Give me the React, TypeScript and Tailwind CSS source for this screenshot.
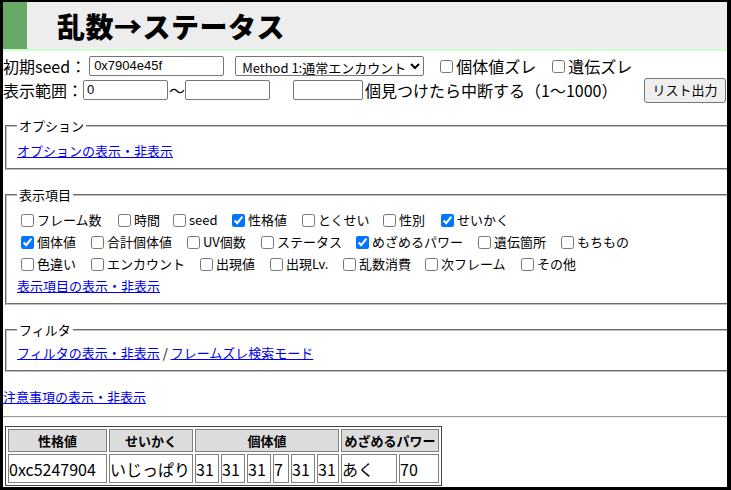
import React from "react";

type Item = { label: string; checked: boolean; w: string };

const rows: Item[][] = [
  [
    { label: "フレーム数", checked: false, w: "w-[97px]" },
    { label: "時間", checked: false, w: "w-[55px]" },
    { label: "seed", checked: false, w: "w-[59px]" },
    { label: "性格値", checked: true, w: "w-[70px]" },
    { label: "とくせい", checked: false, w: "w-[81px]" },
    { label: "性別", checked: false, w: "w-[58px]" },
    { label: "せいかく", checked: true, w: "w-[90px]" },
  ],
  [
    { label: "個体値", checked: true, w: "w-[70px]" },
    { label: "合計個体値", checked: false, w: "w-[96px]" },
    { label: "UV個数", checked: false, w: "w-[74px]" },
    { label: "ステータス", checked: false, w: "w-[95px]" },
    { label: "めざめるパワー", checked: true, w: "w-[122px]" },
    { label: "遺伝箇所", checked: false, w: "w-[83px]" },
    { label: "もちもの", checked: false, w: "w-[90px]" },
  ],
  [
    { label: "色違い", checked: false, w: "w-[70px]" },
    { label: "エンカウント", checked: false, w: "w-[109px]" },
    { label: "出現値", checked: false, w: "w-[70px]" },
    { label: "出現Lv.", checked: false, w: "w-[73px]" },
    { label: "乱数消費", checked: false, w: "w-[82px]" },
    { label: "次フレーム", checked: false, w: "w-[96px]" },
    { label: "その他", checked: false, w: "w-[80px]" },
  ],
];

const ivs = [
  { v: "31", w: "w-[24px]" },
  { v: "31", w: "w-[24px]" },
  { v: "31", w: "w-[24px]" },
  { v: "7", w: "w-[16px]" },
  { v: "31", w: "w-[24px]" },
  { v: "31", w: "w-[22px]" },
];

const Link = ({ children }: { children: React.ReactNode }) => (
  <a href="#" className="text-[#0000ee] underline underline-offset-[1px]">
    {children}
  </a>
);

const fieldsetCls =
  "ml-[2px] -mr-[6px] border-2 [border-style:groove] border-[#c0c0c0] pl-[10px] pr-[10px]";

export default function App() {
  return (
    <div className="w-[731px] h-[490px] bg-black pt-[2px] pl-[3px] pr-[4px] pb-[3px] font-['Noto_Sans_CJK_JP','Noto_Sans',sans-serif]">
      <div className="bg-white w-full h-full overflow-hidden text-black">
        {/* header */}
        <div className="flex h-[49px] bg-[#ededed] border-b-2 border-[#ccffcc]">
          <div className="w-[24px] bg-[#67a967]" />
          <h1 className="ml-[30px] self-center text-[28px] font-black leading-none tracking-[0.5px]">
            乱数→ステータス
          </h1>
        </div>

        {/* seed row */}
        <div className="flex items-center h-[24px] mt-[3px] text-[16px] leading-[20px]">
          <span>初期seed：</span>
          <input
            className="ml-[3px] w-[135px] h-[20px] border border-[#767676] rounded-[2px] pl-[4px] text-[13px] font-['Liberation_Sans',sans-serif]"
            defaultValue="0x7904e45f"
          />
          <select className="ml-[11px] w-[189px] h-[20px] border border-[#767676] rounded-[2px] bg-white text-[13px] pl-[2px]">
            <option>Method 1:通常エンカウント</option>
          </select>
          <label className="ml-[12px] w-[112px] flex items-center">
            <input type="checkbox" className="m-0 ml-[4px] mr-[3px] w-[13px] h-[13px]" />
            個体値ズレ
          </label>
          <label className="flex items-center">
            <input type="checkbox" className="m-0 ml-[4px] mr-[3px] w-[13px] h-[13px]" />
            遺伝ズレ
          </label>
        </div>

        {/* range row */}
        <div className="flex items-center h-[24px] text-[16px] leading-[20px]">
          <span>表示範囲：</span>
          <input
            className="w-[85px] h-[20px] border border-[#767676] rounded-[2px] pl-[3px] text-[13px] font-['Liberation_Sans',sans-serif]"
            defaultValue="0"
          />
          <span className="ml-[1px]">〜</span>
          <input className="w-[85px] h-[20px] border border-[#767676] rounded-[2px]" />
          <input className="ml-[23px] w-[70px] h-[20px] border border-[#767676] rounded-[2px]" />
          <span className="ml-[2px]">個見つけたら中断する（1〜1000）</span>
          <button className="ml-auto mr-[1px] w-[82px] h-[25px] border border-[#767676] rounded-[3px] bg-[#efefef] text-[13px]">
            リスト出力
          </button>
        </div>

        {/* options */}
        <fieldset className={fieldsetCls + " mt-[15px] pb-[8px]"}>
          <legend className="px-[2px] text-[13px] leading-[17px]">オプション</legend>
          <div className="pt-[8px] h-[26px] text-[13px] leading-[18px]">
            <Link>オプションの表示・非表示</Link>
          </div>
        </fieldset>

        {/* display items */}
        <fieldset className={fieldsetCls + " mt-[16px] pb-[7px]"}>
          <legend className="px-[2px] text-[13px] leading-[17px]">表示項目</legend>
          <div className="pt-[6px] text-[13px] leading-[18px]">
            {rows.map((row, i) => (
              <div key={i} className="flex h-[22px] items-center">
                {row.map((it) => (
                  <label key={it.label} className={"flex items-center shrink-0 " + it.w}>
                    <input
                      type="checkbox"
                      defaultChecked={it.checked}
                      className="m-0 ml-[4px] mr-[3px] w-[13px] h-[13px]"
                    />
                    <span>{it.label}</span>
                  </label>
                ))}
              </div>
            ))}
            <div className="h-[21px] flex items-center">
              <Link>表示項目の表示・非表示</Link>
            </div>
          </div>
        </fieldset>

        {/* filter */}
        <fieldset className={fieldsetCls + " mt-[16px] pb-[8px]"}>
          <legend className="px-[2px] text-[13px] leading-[17px]">フィルタ</legend>
          <div className="pt-[6px] h-[24px] text-[13px] leading-[18px]">
            <Link>フィルタの表示・非表示</Link> / <Link>フレームズレ検索モード</Link>
          </div>
        </fieldset>

        <div className="mt-[16px] h-[18px] text-[13px] leading-[18px]">
          <Link>注意事項の表示・非表示</Link>
        </div>

        <div className="mt-[10px] border-t border-t-[#9a9a9a] border-b border-b-[#eeeeee]" />

        {/* result table */}
        <table className="mt-[8px] ml-[2px] border border-[#444444] border-separate border-spacing-[2px]">
          <thead>
            <tr>
              <th className="h-[23px] border border-[#808080] bg-[#dcdcdc] text-[13px] font-bold p-0">性格値</th>
              <th className="h-[23px] border border-[#808080] bg-[#dcdcdc] text-[13px] font-bold p-0">せいかく</th>
              <th colSpan={6} className="h-[23px] border border-[#808080] bg-[#dcdcdc] text-[13px] font-bold p-0">
                個体値
              </th>
              <th colSpan={2} className="h-[23px] border border-[#808080] bg-[#dcdcdc] text-[13px] font-bold p-0 whitespace-nowrap">
                めざめるパワー
              </th>
            </tr>
          </thead>
          <tbody>
            <tr className="text-[16px] leading-[20px]">
              <td className="h-[29px] w-[99px] border border-[#808080] p-0">0xc5247904</td>
              <td className="h-[29px] w-[84px] border border-[#808080] p-0 whitespace-nowrap">いじっぱり</td>
              {ivs.map((iv, i) => (
                <td key={i} className={"h-[29px] border border-[#808080] p-0 " + iv.w}>
                  {iv.v}
                </td>
              ))}
              <td className="h-[29px] w-[56px] border border-[#808080] p-0">あく</td>
              <td className="h-[29px] w-[40px] border border-[#808080] p-0">70</td>
            </tr>
          </tbody>
        </table>
      </div>
    </div>
  );
}
